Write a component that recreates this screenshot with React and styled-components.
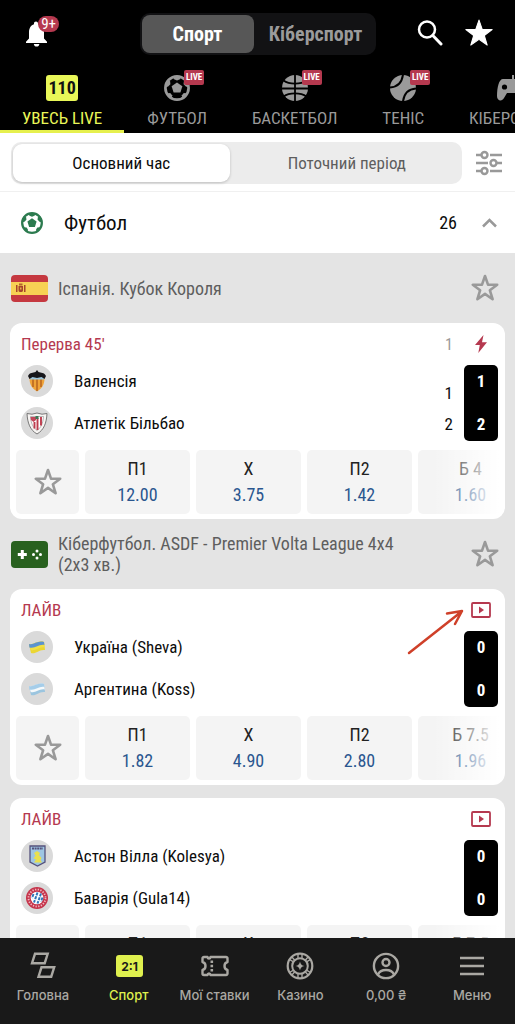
import React from "react";
import styled, { createGlobalStyle, css } from "styled-components";

const condensed = `"Roboto Condensed", "Liberation Sans Narrow", Roboto, sans-serif`;

const GlobalStyle = createGlobalStyle`
  * {
    box-sizing: border-box;
  }

  body {
    margin: 0;
    background: #e4e4e4;
    font-family: ${condensed};
    font-size: 17px;
    color: #0c0c0c;
  }

  button {
    border: 0;
    padding: 0;
    background: none;
    color: inherit;
    font: inherit;
    cursor: pointer;
  }

  svg {
    display: block;
    flex-shrink: 0;
  }
`;

const Screen = styled.div`
  display: flex;
  flex-direction: column;
  height: 100vh;
  overflow: hidden;
`;

const Header = styled.header`
  flex-shrink: 0;
  background: #000;
  color: #9a9a9a;
`;

const TopBar = styled.div`
  display: grid;
  grid-template-columns: 1fr auto 1fr;
  align-items: center;
  height: 68px;
  padding: 0 22px;
`;

const BellButton = styled.button`
  position: relative;
  justify-self: start;
  color: #fff;
`;

const BellBadge = styled.span`
  position: absolute;
  top: -4px;
  right: -9px;
  height: 16px;
  padding: 0 3px;
  border-radius: 8px;
  background: #b5394f;
  color: #fff;
  font-size: 15px;
  line-height: 16px;
`;

const Actions = styled.div`
  display: flex;
  justify-self: end;
  gap: 22px;
  padding-bottom: 2px;
  color: #fff;
`;

const ModeSwitch = styled.div`
  display: flex;
  padding: 2px;
  border-radius: 10px;
  background: #121214;
`;

const ModeButton = styled.button`
  width: ${(props) => (props.$active ? 112 : 120)}px;
  height: 38px;
  padding-left: ${(props) => (props.$active ? 0 : 4)}px;
  border-radius: 8px;
  font-size: 20px;
  font-weight: bold;
  color: #9b9b9b;

  ${(props) =>
    props.$active &&
    css`
      background: #575757;
      color: #fff;
    `}
`;

const SportTabs = styled.nav`
  display: flex;
  gap: 1px;
  height: 65px;
  overflow: hidden;
`;

const SportTab = styled.button`
  display: flex;
  flex-direction: column;
  flex-shrink: 0;
  align-items: center;
  gap: 6px;
  padding: 7px 22px 0;
  border-bottom: 3px solid transparent;
  line-height: 22px;
  white-space: nowrap;

  ${(props) =>
    props.$active &&
    css`
      border-color: #e6f04e;
      color: #e9f758;
    `}
`;

const TabIcon = styled.span`
  position: relative;
  display: block;
  height: 26px;
`;

const LiveTag = styled.span`
  position: absolute;
  top: -5px;
  left: 20px;
  width: 20px;
  border-radius: 2px;
  background: #b5394f;
  color: #fff;
  font-size: 9px;
  font-weight: bold;
  line-height: 15px;
`;

const LiveCount = styled.span`
  display: block;
  width: 32px;
  border-radius: 3px;
  background: #e9f758;
  color: #111;
  font-size: 18px;
  font-weight: bold;
  line-height: 26px;
`;

const PeriodBar = styled.div`
  display: flex;
  flex-shrink: 0;
  align-items: center;
  gap: 13px;
  padding: 9px 12px 7px 11px;
  border-bottom: 1px solid #f0f0f0;
  background: #fff;
  color: #999;
`;

const PeriodSwitch = styled.div`
  display: flex;
  flex: 1;
  padding: 2px;
  border-radius: 10px;
  background: #ececec;
`;

const PeriodButton = styled.button`
  flex: ${(props) => (props.$active ? 22 : 23)};
  height: 38px;
  padding-left: ${(props) => (props.$active ? 0 : 4)}px;
  border-radius: 9px;
  color: #5e5e5e;

  ${(props) =>
    props.$active &&
    css`
      background: #fff;
      box-shadow: 0 1px 3px rgba(0, 0, 0, 0.2);
      color: #0c0c0c;
    `}
`;

const Feed = styled.main`
  flex: 1;
  min-height: 0;
  overflow-y: auto;
  scrollbar-width: none;
`;

const SportHeading = styled.div`
  display: flex;
  align-items: center;
  height: 61px;
  padding: 0 18px 0 21px;
  background: #fff;
  color: #999;
`;

const SportName = styled.h2`
  flex: 1;
  margin: 0 0 0 21px;
  color: #0c0c0c;
  font-size: 21px;
  font-weight: normal;
`;

const SportCount = styled.span`
  margin-right: 25px;
  color: #0c0c0c;
  font-size: 18px;
`;

const LeagueHeading = styled.div`
  display: flex;
  align-items: center;
  gap: 10px;
  height: 70px;
  padding: 0 16px 0 11px;
  color: #999;
`;

const LeagueName = styled.h3`
  flex: 1;
  margin: 0;
  padding-right: 64px;
  color: #5e5e5e;
  font-size: 18px;
  font-weight: normal;
  line-height: 21px;
`;

const Card = styled.article`
  position: relative;
  margin: 0 10px 13px;
  padding-bottom: 5px;
  border-radius: 12px;
  background: #fff;

  &:has(+ ${LeagueHeading}) {
    margin-bottom: 0;
  }
`;

const CardHead = styled.div`
  display: flex;
  align-items: center;
  height: 42px;
  padding: 0 14px 0 11px;
  color: #b5394f;
`;

const MatchStatus = styled.span`
  flex: 1;
`;

const PeriodLabel = styled.span`
  width: 8px;
  margin-right: 18px;
  color: #999;
  font-size: 16px;
`;

const CardBody = styled.div`
  display: flex;
  height: 76px;
  padding: 0 7px 0 11px;
`;

const Teams = styled.div`
  display: flex;
  flex: 1;
  flex-direction: column;
  gap: 10px;
`;

const Team = styled.div`
  display: flex;
  align-items: center;
  gap: 21px;
`;

const Emblem = styled.span`
  display: flex;
  align-items: center;
  justify-content: center;
  width: 32px;
  height: 32px;
  border-radius: 50%;
  background: #dadada;
`;

const PeriodScore = styled.div`
  display: flex;
  flex-direction: column;
  justify-content: flex-end;
  margin-right: 11px;
  padding-bottom: 1px;
  line-height: 31px;
`;

const Score = styled.div`
  display: flex;
  flex-direction: column;
  justify-content: space-between;
  width: 34px;
  border-radius: 5px;
  background: #000;
  color: #fff;
  font-weight: bold;
  line-height: 33px;
  text-align: center;
`;

const Odds = styled.div`
  position: relative;
  display: flex;
  gap: 6px;
  margin: 9px 6px 0;
  overflow: hidden;

  &::after {
    content: "";
    position: absolute;
    inset: 0 0 0 auto;
    width: 66px;
    background: linear-gradient(to right, rgba(255, 255, 255, 0), #fff);
    pointer-events: none;
  }
`;

const OddCell = styled.button`
  display: flex;
  flex-direction: column;
  flex-shrink: 0;
  align-items: center;
  justify-content: center;
  width: ${(props) => (props.$narrow ? 63 : 105)}px;
  height: 64px;
  border-radius: 5px;
  background: #f4f4f4;
  color: ${(props) => (props.$narrow ? "#999" : "#222")};
  font-size: 18px;
  line-height: 26px;
`;

const OddValue = styled.span`
  color: #2a568f;
`;

const Pointer = styled.svg`
  position: absolute;
  top: 19px;
  right: 41px;
`;

const BottomNav = styled.nav`
  display: grid;
  flex-shrink: 0;
  grid-template-columns: repeat(6, 1fr);
  height: 86px;
  padding-top: 14px;
  background: #191919;
`;

const NavItem = styled.a`
  display: flex;
  flex-direction: column;
  align-items: center;
  gap: 5px;
  color: ${(props) => (props.$active ? "#dff04e" : "#aaa8a3")};
  font-family: Inter, sans-serif;
  font-size: 13px;
  font-weight: 500;
  line-height: 20px;
  text-decoration: none;
  white-space: nowrap;
`;

const starPoints =
  "13,1 16,9.6 25.2,9.8 17.9,15.3 20.6,24.2 13,18.9 5.4,24.2 8.1,15.3 0.8,9.8 10,9.6";

const SolidStar = () => (
  <svg width="28" height="28" viewBox="0 0 26 26" fill="currentColor">
    <polygon points={starPoints} stroke="currentColor" strokeLinejoin="round" />
  </svg>
);

const StarIcon = () => (
  <svg width="28" height="28" viewBox="-1 -1 28 28" fill="none">
    <polygon
      points={starPoints}
      stroke="currentColor"
      strokeWidth="2.6"
      strokeLinejoin="round"
    />
  </svg>
);

const BellIcon = () => (
  <svg width="28" height="28" viewBox="-1 0 28 28" fill="currentColor">
    <path d="M13 1.5c1.2 0 2 .8 2 2v.8c3.8.9 6 3.9 6 8v6.2l3 3.3v1.2H3v-1.2l3-3.3v-6.2c0-4.1 2-7.1 5-8v-.8c0-1.2.7-2 2-2z" />
    <path d="M10.8 24h5.600c-.2 1.600-1.300 2.600-2.800 2.600s-2.600-1-2.800-2.600z" />
  </svg>
);

const SearchIcon = () => (
  <svg width="26" height="28" viewBox="0 0 26 28" fill="none" stroke="currentColor">
    <circle cx="10" cy="10.5" r="8" strokeWidth="2.5" />
    <path d="M15.800 16.500l8.200 8.500" strokeWidth="3" strokeLinecap="round" />
  </svg>
);

const BallIcon = ({ size = 26, color = "currentColor" }) => (
  <svg width={size} height={size} viewBox="0 0 26 26" fill={color}>
    <circle cx="13" cy="13" r="11.6" fill="none" stroke={color} strokeWidth="2.7" />
    <path d="M13 7.400l5.400 3.900-2 6.300H9.600l-2-6.300z" />
    <path d="M8.800 1.800h8.400L16 4.300l-3 1.200-3-1.200z" />
    <path d="M1 9.500l2.500-4.800 2.600 1.600.3 3-2.300 2.300-3 .8z" />
    <path d="M25 9.500l-2.500-4.800-2.600 1.600-.3 3 2.300 2.300 3 .8z" />
    <path d="M3 18.500l3.200-.4 1.900 2.200-.3 3.500-2.300-1z" />
    <path d="M23 18.500l-3.200-.4-1.900 2.200.3 3.500 2.300-1z" />
  </svg>
);

const BasketballIcon = () => (
  <svg width="26" height="26" viewBox="0 0 26 26">
    <circle cx="13" cy="13" r="13" fill="currentColor" />
    <g fill="none" stroke="#000" strokeWidth="1.8">
      <path d="M13 0v26M0 13.500h26" />
      <path d="M1.500 5.500C5 8 9 8.600 13 8.600s8-.6 11.500-3.100M1.500 21.500C5 19 9 18.400 13 18.400s8 .6 11.500 3.100" />
    </g>
  </svg>
);

const TennisIcon = () => (
  <svg width="26" height="26" viewBox="0 0 26 26">
    <circle cx="13" cy="13" r="13" fill="currentColor" />
    <g fill="none" stroke="#000" strokeWidth="2">
      <path d="M0 12.500c7.500-.5 12-5 13-13" />
      <path d="M13 26.500c1-8 5.500-12.500 13-13" />
    </g>
  </svg>
);

const GamepadIcon = () => (
  <svg width="34" height="26" viewBox="0 0 34 26">
    <path
      d="M17 3V0h-2v4H6C2 4 0 12 0 21c0 5 5 6 7 2l3-5h14l3 5c2 4 7 3 7-2 0-9-2-17-6-17H17z"
      fill="currentColor"
    />
    <circle cx="7.5" cy="12" r="2.6" fill="#000" />
    <circle cx="26" cy="12" r="2.6" fill="#000" />
  </svg>
);

const FilterIcon = () => (
  <svg width="28" height="28" viewBox="0 0 28 28" fill="none" stroke="currentColor" strokeWidth="2.4">
    <path d="M1 6h5M15 6h12M1 14h12M22 14h5M1 22h5M15 22h12" />
    <circle cx="9.5" cy="6" r="3" />
    <circle cx="18.5" cy="14" r="3" />
    <circle cx="9.5" cy="22" r="3" />
  </svg>
);

const ChevronIcon = () => (
  <svg width="15" height="10" viewBox="0 0 15 10" fill="none">
    <path d="M1 8.500l6.500-6.500L14 8.500" stroke="currentColor" strokeWidth="2.5" />
  </svg>
);

const BoltIcon = () => (
  <svg width="20" height="18" viewBox="-4 0 20 18" fill="currentColor">
    <path d="M8.500 0L0 10h4.800L3.300 18 12 7.200H7z" />
  </svg>
);

const VideoIcon = () => (
  <svg width="20" height="16" viewBox="0 0 20 16" fill="none">
    <rect x="1" y="1" width="18" height="14" rx="1" stroke="currentColor" strokeWidth="1.8" />
    <path d="M8 4.500v7l5-3.500z" fill="currentColor" />
  </svg>
);

const SpainFlag = () => (
  <svg width="37" height="27" viewBox="0 0 37 27">
    <rect width="37" height="27" rx="4" fill="#c53840" />
    <rect y="7" width="37" height="13" fill="#f7d154" />
    <g fill="#a8442c">
      <path d="M5 10h1.500v7H5zM13 10h1.500v7H13z" />
      <path d="M7.500 11h4.500v4.500c0 2-4.500 2-4.500 0z" />
      <path d="M8 8.500h3.500v2H8z" fill="#b5642c" />
    </g>
    <path d="M9 12.500h1.500v2H9z" fill="#e7b04a" />
  </svg>
);

const CyberFlag = () => (
  <svg width="37" height="27" viewBox="0 0 37 27" fill="#fff">
    <rect width="37" height="27" rx="4" fill="#28611f" />
    <path d="M9.800 9h3v3h3v3h-3v3h-3v-3h-3v-3h3z" />
    <circle cx="26" cy="10" r="1.5" />
    <circle cx="26" cy="17" r="1.5" />
    <circle cx="22.5" cy="13.5" r="1.5" />
    <circle cx="29.5" cy="13.5" r="1.5" />
  </svg>
);

const ValenciaCrest = () => (
  <svg width="18" height="22" viewBox="0 0 18 22">
    <path d="M2 6h14c1.500 6-1 12-7 15.500C3 18 .5 12 2 6z" fill="#efa338" />
    <path d="M5 9v8M9 9v12M13 9v8" stroke="#b7641f" strokeWidth="1.5" />
    <path d="M2 6.500h14v3H2z" fill="#9dc6dc" />
    <path d="M0 6C2 2 5 3 7.500 2L9 0l1.500 2C13 3 16 2 18 6l-1.500 3-3-2L9 8 4.500 7l-3 2z" fill="#17171b" />
  </svg>
);

const AthleticCrest = () => (
  <svg width="22" height="23" viewBox="0 0 22 23">
    <path d="M1 1.500l5 .7L11 1l5 1.200 5-.7C20.500 11 18 18 11 22 4 18 1.500 11 1 1.500z" fill="#f7f4f2" stroke="#777" />
    <path d="M4.500 4.500h13c-.5 7-2.500 11-6.500 14-4-3-6-7-6.500-14z" fill="#fff" stroke="#999" strokeWidth=".7" />
    <path d="M11.500 6v12M15 5v8.500M8.500 10v6.500" stroke="#bd3b4c" strokeWidth="1.9" />
    <path d="M4.500 5H10v3L7.500 10 5 8z" fill="#c2475a" />
    <path d="M9.500 4h3v3h-3z" fill="#3c7655" />
  </svg>
);

const WavingFlag = ({ top, middle, bottom }) => (
  <svg width="18" height="15" viewBox="0 0 18 15">
    <path d="M1 4c5 1.500 8-4 15-2l1 8c-6-1-9 4.500-14 3z" fill={bottom} />
    <path d="M1 4c5 1.500 8-4 15-2l.7 5.500c-6-1-9 4-14 2.500z" fill={middle} />
    <path d="M1 4c5 1.500 8-4 15-2l.4 3c-6-1-9 4-15 2.500z" fill={top} />
  </svg>
);

const UkraineFlag = () => <WavingFlag top="#5b93d0" middle="#f1e044" bottom="#ebd633" />;

const ArgentinaFlag = () => <WavingFlag top="#a5cde9" middle="#f5f9fb" bottom="#9bc5df" />;

const VillaCrest = () => (
  <svg width="17" height="22" viewBox="0 0 17 22">
    <path d="M1 1h15v16l-7.500 4L1 17z" fill="#9ec6e3" stroke="#55527c" strokeWidth="1.3" />
    <path d="M3 3.500h11" stroke="#55527c" strokeWidth="2" strokeDasharray="2 .6" />
    <path d="M5 8l3-2 3 2-1 2 2.500 3-1 2 1.500 2.500H5l2-3-2.500-1 2-3z" fill="#e9e04d" />
  </svg>
);

const BayernCrest = () => (
  <svg width="22" height="22" viewBox="0 0 22 22">
    <circle cx="11" cy="11" r="11" fill="#c5344b" />
    <circle cx="11" cy="11" r="8.5" fill="none" stroke="#efb9c1" strokeWidth="1.8" strokeDasharray="1.3 1.4" />
    <circle cx="11" cy="11" r="6.3" fill="#fff" />
    <path d="M7.500 7l-1.500 4M11.500 5.500L8 15.500M15 6.500l-3.500 10M16.500 10.500L15 14.500" stroke="#2f75b8" strokeWidth="2" strokeDasharray="3 1" />
  </svg>
);

const HomeIcon = () => (
  <svg width="28" height="28" viewBox="0 0 28 28" fill="none" stroke="currentColor" strokeWidth="2.4">
    <path d="M6 1.800h12.700l-3 9.400H3zM12.500 15.300h12.700l-3 9.400H9.500z" />
  </svg>
);

const ScoreIcon = () => (
  <svg width="28" height="28" viewBox="0 0 28 28">
    <rect x="1" y="3" width="27" height="22" rx="3" fill="currentColor" />
    <text x="14.5" y="18.5" fill="#191919" fontSize="12" fontWeight="700" textAnchor="middle">
      2:1
    </text>
  </svg>
);

const TicketIcon = () => (
  <svg width="28" height="28" viewBox="0 0 28 28" fill="none" stroke="currentColor" strokeWidth="2.4">
    <path
      d="M3 5h3.500c.3 2 2.700 2 3 0H25a1.500 1.500 0 0 1 1.500 1.500V10c-4 1-4 7 0 8v3.500A1.500 1.500 0 0 1 25 23H9.500c-.3-2-2.700-2-3 0H3a1.500 1.500 0 0 1-1.500-1.500V18c4-1 4-7 0-8V6.500A1.500 1.500 0 0 1 3 5z"
      strokeLinejoin="round"
    />
    <path d="M10.800 8.500v11" strokeWidth="2.6" strokeDasharray="2.6 1.6" />
  </svg>
);

const ChipIcon = () => (
  <svg width="28" height="28" viewBox="0 0 28 28" fill="none" stroke="currentColor">
    <circle cx="14" cy="14" r="12.3" strokeWidth="2.2" />
    <circle cx="14" cy="14" r="7.8" strokeWidth="2" />
    <path
      d="M12 1.500v5M16 1.500v5M12 21.500v5M16 21.500v5M3.500 7.500l4 2.300M5.500 4.500L9 8.500M24.500 7.500l-4 2.300M22.500 4.500L19 8.500M3.500 20.500l4-2.300M5.500 23.500L9 19.500M24.500 20.500l-4-2.300M22.500 23.500L19 19.500"
      strokeWidth="1.4"
    />
    <path d="M14 9.500c.7 3 1.500 3.800 4.500 4.500-3 .7-3.800 1.500-4.500 4.500-.7-3-1.500-3.800-4.500-4.500 3-.7 3.800-1.500 4.500-4.500z" fill="currentColor" stroke="none" />
  </svg>
);

const UserIcon = () => (
  <svg width="28" height="28" viewBox="0 0 28 28" fill="none" stroke="currentColor" strokeWidth="2.4">
    <circle cx="14" cy="14" r="12.1" />
    <circle cx="14" cy="10.5" r="3.5" />
    <path d="M6 22.500c1.500-3.500 4.500-4.500 8-4.500s6.500 1 8 4.500" />
  </svg>
);

const MenuIcon = () => (
  <svg width="28" height="28" viewBox="0 0 28 28" stroke="currentColor" strokeWidth="2.4">
    <path d="M2 6h24M2 14h24M2 22h24" />
  </svg>
);

const sports = [
  { name: "ФУТБОЛ", icon: <BallIcon />, live: true },
  { name: "БАСКЕТБОЛ", icon: <BasketballIcon />, live: true },
  { name: "ТЕНІС", icon: <TennisIcon />, live: true },
  { name: "КІБЕРСПОРТ", icon: <GamepadIcon />, live: false },
];

const leagues = [
  {
    name: "Іспанія. Кубок Короля",
    flag: <SpainFlag />,
    matches: [
      {
        status: "Перерва 45'",
        period: "1",
        periodScore: [1, 2],
        teams: [
          { name: "Валенсія", emblem: <ValenciaCrest />, score: 1 },
          { name: "Атлетік Більбао", emblem: <AthleticCrest />, score: 2 },
        ],
        odds: [["П1", "12.00"], ["X", "3.75"], ["П2", "1.42"], ["Б 4", "1.60"]],
      },
    ],
  },
  {
    name: "Кіберфутбол. ASDF - Premier Volta League 4x4 (2x3 хв.)",
    flag: <CyberFlag />,
    matches: [
      {
        status: "ЛАЙВ",
        video: true,
        highlighted: true,
        teams: [
          { name: "Україна (Sheva)", emblem: <UkraineFlag />, score: 0 },
          { name: "Аргентина (Koss)", emblem: <ArgentinaFlag />, score: 0 },
        ],
        odds: [["П1", "1.82"], ["X", "4.90"], ["П2", "2.80"], ["Б 7.5", "1.96"]],
      },
      {
        status: "ЛАЙВ",
        video: true,
        teams: [
          { name: "Астон Вілла (Kolesya)", emblem: <VillaCrest />, score: 0 },
          { name: "Баварія (Gula14)", emblem: <BayernCrest />, score: 0 },
        ],
        odds: [["П1", "2.15"], ["X", "4.60"], ["П2", "2.30"], ["Б 7.5", "1.90"]],
      },
    ],
  },
];

const navItems = [
  { label: "Головна", icon: <HomeIcon /> },
  { label: "Спорт", icon: <ScoreIcon />, active: true },
  { label: "Мої ставки", icon: <TicketIcon /> },
  { label: "Казино", icon: <ChipIcon /> },
  { label: "0,00 ₴", icon: <UserIcon /> },
  { label: "Меню", icon: <MenuIcon /> },
];

const Match = ({ match }) => (
  <Card>
    <CardHead>
      <MatchStatus>{match.status}</MatchStatus>
      {match.period && <PeriodLabel>{match.period}</PeriodLabel>}
      {match.video ? (
        <button aria-label="Відео">
          <VideoIcon />
        </button>
      ) : (
        <button aria-label="Швидка ставка">
          <BoltIcon />
        </button>
      )}
    </CardHead>
    <CardBody>
      <Teams>
        {match.teams.map((team) => (
          <Team key={team.name}>
            <Emblem>{team.emblem}</Emblem>
            {team.name}
          </Team>
        ))}
      </Teams>
      {match.periodScore && (
        <PeriodScore>
          {match.periodScore.map((score, index) => (
            <span key={index}>{score}</span>
          ))}
        </PeriodScore>
      )}
      <Score>
        {match.teams.map((team) => (
          <span key={team.name}>{team.score}</span>
        ))}
      </Score>
    </CardBody>
    <Odds>
      <OddCell $narrow aria-label="До обраного">
        <StarIcon />
      </OddCell>
      {match.odds.map(([label, value]) => (
        <OddCell key={label}>
          {label}
          <OddValue>{value}</OddValue>
        </OddCell>
      ))}
    </Odds>
    {match.highlighted && (
      <Pointer width="58" height="48" viewBox="0 0 58 48" fill="none" stroke="#cf4029">
        <path d="M3 45L55 4M41 5.500L56 3 49 16" strokeWidth="2.5" strokeLinecap="round" strokeLinejoin="round" />
      </Pointer>
    )}
  </Card>
);

const App = () => {
  return (
    <Screen>
      <GlobalStyle />
      <Header>
        <TopBar>
          <BellButton aria-label="Сповіщення">
            <BellIcon />
            <BellBadge>9+</BellBadge>
          </BellButton>
          <ModeSwitch>
            <ModeButton $active>Спорт</ModeButton>
            <ModeButton>Кіберспорт</ModeButton>
          </ModeSwitch>
          <Actions>
            <button aria-label="Пошук">
              <SearchIcon />
            </button>
            <button aria-label="Обране">
              <SolidStar />
            </button>
          </Actions>
        </TopBar>
        <SportTabs>
          <SportTab $active>
            <LiveCount>110</LiveCount>
            УВЕСЬ LIVE
          </SportTab>
          {sports.map((sport) => (
            <SportTab key={sport.name}>
              <TabIcon>
                {sport.icon}
                {sport.live && <LiveTag>LIVE</LiveTag>}
              </TabIcon>
              {sport.name}
            </SportTab>
          ))}
        </SportTabs>
      </Header>
      <PeriodBar>
        <PeriodSwitch>
          <PeriodButton $active>Основний час</PeriodButton>
          <PeriodButton>Поточний період</PeriodButton>
        </PeriodSwitch>
        <button aria-label="Фільтри">
          <FilterIcon />
        </button>
      </PeriodBar>
      <Feed>
        <SportHeading>
          <BallIcon size={22} color="#2c7b4f" />
          <SportName>Футбол</SportName>
          <SportCount>26</SportCount>
          <button aria-label="Згорнути">
            <ChevronIcon />
          </button>
        </SportHeading>
        {leagues.map((league) => (
          <React.Fragment key={league.name}>
            <LeagueHeading>
              {league.flag}
              <LeagueName>{league.name}</LeagueName>
              <button aria-label="До обраного">
                <StarIcon />
              </button>
            </LeagueHeading>
            {league.matches.map((match) => (
              <Match key={match.teams[0].name} match={match} />
            ))}
          </React.Fragment>
        ))}
      </Feed>
      <BottomNav>
        {navItems.map((item) => (
          <NavItem key={item.label} href="#" $active={item.active}>
            {item.icon}
            {item.label}
          </NavItem>
        ))}
      </BottomNav>
    </Screen>
  );
};

export default App;
